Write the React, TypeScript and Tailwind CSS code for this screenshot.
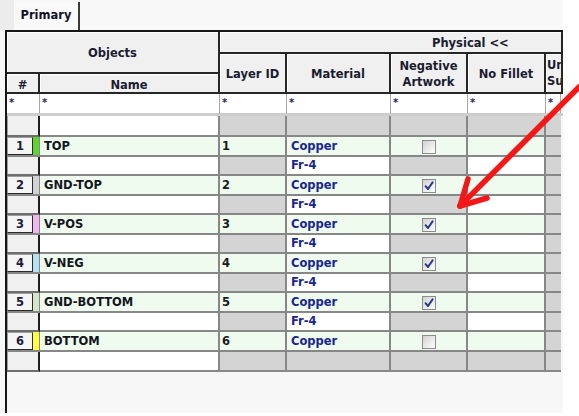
import React from "react";

type Kind = "blankTop" | "layer" | "diel" | "blankBottom";
interface Row {
  kind: Kind;
  h: string;
  num?: number;
  name?: string;
  swatch?: string;
  layerId?: string;
  material?: string;
  checked?: boolean;
}

const rows: Row[] = [
  { kind: "blankTop", h: "h-[21px]" },
  { kind: "layer", h: "h-[20px]", num: 1, name: "TOP", swatch: "bg-[#5fd42e]", layerId: "1", material: "Copper", checked: false },
  { kind: "diel", h: "h-[19px]", material: "Fr-4" },
  { kind: "layer", h: "h-[20px]", num: 2, name: "GND-TOP", swatch: "bg-[#d2d2d2]", layerId: "2", material: "Copper", checked: true },
  { kind: "diel", h: "h-[19px]", material: "Fr-4" },
  { kind: "layer", h: "h-[20px]", num: 3, name: "V-POS", swatch: "bg-[#f0b4ee]", layerId: "3", material: "Copper", checked: true },
  { kind: "diel", h: "h-[19px]", material: "Fr-4" },
  { kind: "layer", h: "h-[20px]", num: 4, name: "V-NEG", swatch: "bg-[#b4e4f4]", layerId: "4", material: "Copper", checked: true },
  { kind: "diel", h: "h-[19px]", material: "Fr-4" },
  { kind: "layer", h: "h-[20px]", num: 5, name: "GND-BOTTOM", swatch: "bg-[#d4e4c4]", layerId: "5", material: "Copper", checked: true },
  { kind: "diel", h: "h-[19px]", material: "Fr-4" },
  { kind: "layer", h: "h-[20px]", num: 6, name: "BOTTOM", swatch: "bg-[#ffff3c]", layerId: "6", material: "Copper", checked: false },
  { kind: "blankBottom", h: "h-[20px]" },
];

const GREEN = "bg-[#eefbee]";
const GRAY = "bg-[#d4d4d4]";
const WHITE = "bg-white";
const cell =
  "shrink-0 border-r-2 border-b-2 border-[#878787] flex items-center pt-[1px] overflow-hidden whitespace-nowrap";
const hdr =
  "shrink-0 bg-[#f0f0f0] border-r-2 border-b-2 border-[#262626] shadow-[inset_1px_1px_0_#ffffff] flex items-center justify-center text-center text-[#1b1b2f] leading-[16px] overflow-hidden whitespace-nowrap";

function Checkbox({ checked }: { checked: boolean }) {
  return (
    <div className="w-[14px] h-[14px] border border-[#8c8c8c] bg-gradient-to-br from-[#d2d2d2] to-[#ffffff] flex items-center justify-center">
      {checked && (
        <svg width="12" height="12" viewBox="0 0 12 12">
          <path d="M2.6 6.2 L5 9 L9.6 2.4" fill="none" stroke="#27398c" strokeWidth="2" strokeLinecap="round" strokeLinejoin="round" />
        </svg>
      )}
    </div>
  );
}

function DataRow({ r }: { r: Row }) {
  const layer = r.kind === "layer";
  const diel = r.kind === "diel";
  return (
    <div className={`flex ${r.h}`}>
      {layer ? (
        <div className="w-[33px] shrink-0 flex border-b-2 border-[#878787]">
          <div className="w-[26px] bg-[#f5f5f5] border border-[#9c9c9c] border-r-[#2a2a2a] border-b-[#2a2a2a] flex items-center justify-center pt-[1px] text-[#1b1b3a]">
            {r.num}
          </div>
          <div className={`w-[6px] ${r.swatch}`} />
          <div className="w-[1px] bg-[#878787]" />
        </div>
      ) : (
        <div className="w-[33px] shrink-0 bg-[#f0f0f0] border-r-2 border-r-[#1e1e1e] border-b-2 border-b-[#6e6e6e] shadow-[inset_1px_0_0_#9c9c9c]" />
      )}
      <div className={`${cell} w-[180px] pl-[4px] text-[#151520] ${layer ? GREEN : WHITE}`}>{r.name}</div>
      <div className={`${cell} w-[67px] pl-[2px] text-[#1a1a1a] ${layer ? GREEN : GRAY}`}>{r.layerId}</div>
      <div className={`${cell} w-[104px] pl-[4px] text-[#1a2690] ${layer ? GREEN : diel ? WHITE : GRAY}`}>{r.material}</div>
      <div className={`${cell} w-[77px] justify-center pt-0 ${layer ? GREEN : GRAY}`}>
        {layer && <Checkbox checked={!!r.checked} />}
      </div>
      <div className={`${cell} w-[78px] ${layer ? GREEN : diel ? WHITE : GRAY}`} />
      <div className={`shrink-0 w-[15px] border-b-2 border-[#878787] ${GRAY}`} />
    </div>
  );
}

const filterWidths = ["w-[33px]", "w-[180px]", "w-[67px]", "w-[104px]", "w-[77px]", "w-[78px]", "w-[15px]"];

export default function App() {
  return (
    <div className="relative w-[579px] h-[416px] bg-white overflow-hidden font-['DejaVu_Sans',sans-serif] text-[11.5px] font-bold">
      <div className="w-[563px] h-[413px] bg-[#f7f7f7] flex flex-col overflow-hidden">
        {/* tab strip */}
        <div className="h-[30px] flex shrink-0">
          <div className="w-[14px] bg-[#ececec]" />
          <div className="w-[66px] mt-[2px] border-r-2 border-[#3a3a3a] bg-[#f9f9f9] flex items-center justify-center text-[#10102a]">
            Primary
          </div>
          <div className="flex-1 bg-[#f8f8f8]" />
        </div>

        {/* grid */}
        <div className="ml-[5px] w-[558px] flex-1 border-l-2 border-t-2 border-[#161616] overflow-hidden flex flex-col">
          {/* header */}
          <div className="flex h-[62px] shrink-0">
            <div className="w-[213px] shrink-0 flex flex-col">
              <div className={`${hdr} h-[42px] w-[213px] pt-[2px]`}>Objects</div>
              <div className="flex h-[20px]">
                <div className={`${hdr} w-[33px] pt-[4px]`}>#</div>
                <div className={`${hdr} w-[180px] pt-[4px]`}>Name</div>
              </div>
            </div>
            <div className="flex flex-col w-[343px]">
              <div className={`${hdr} h-[22px] w-[343px] justify-start pl-[212px] pt-[2px]`}>Physical &lt;&lt;</div>
              <div className="flex h-[40px]">
                <div className={`${hdr} w-[67px] pt-[2px]`}>Layer ID</div>
                <div className={`${hdr} w-[104px] pt-[2px]`}>Material</div>
                <div className={`${hdr} w-[77px] pt-[1px]`}>
                  Negative
                  <br />
                  Artwork
                </div>
                <div className={`${hdr} w-[78px] pt-[2px]`}>No Fillet</div>
                <div className={`${hdr} w-[17px] border-r-0 justify-start pl-[1px] text-left`}>
                  Un
                  <br />
                  Su
                </div>
              </div>
            </div>
          </div>

          {/* filter row */}
          <div className="flex h-[22px] shrink-0 border-b-[3px] border-[#cdcdcd] text-[10px] text-[#2a2a55]">
            {filterWidths.map((w, i) => (
              <div key={i} className={`bg-white border-r border-[#a8a8a8] pl-[2px] pt-[3px] leading-[12px] shrink-0 ${w}`}>
                *
              </div>
            ))}
          </div>

          {rows.map((r, i) => (
            <DataRow key={i} r={r} />
          ))}
        </div>
      </div>

      {/* red annotation arrow */}
      <svg className="absolute left-0 top-0 pointer-events-none" width="579" height="416" viewBox="0 0 579 416">
        <g fill="none" stroke="#f21818" strokeWidth="5.5" strokeLinecap="round" strokeLinejoin="round">
          <path d="M579 87 L460 206" />
          <path d="M460 206 L468 179" />
          <path d="M460 206 L487 198" />
        </g>
      </svg>
    </div>
  );
}
